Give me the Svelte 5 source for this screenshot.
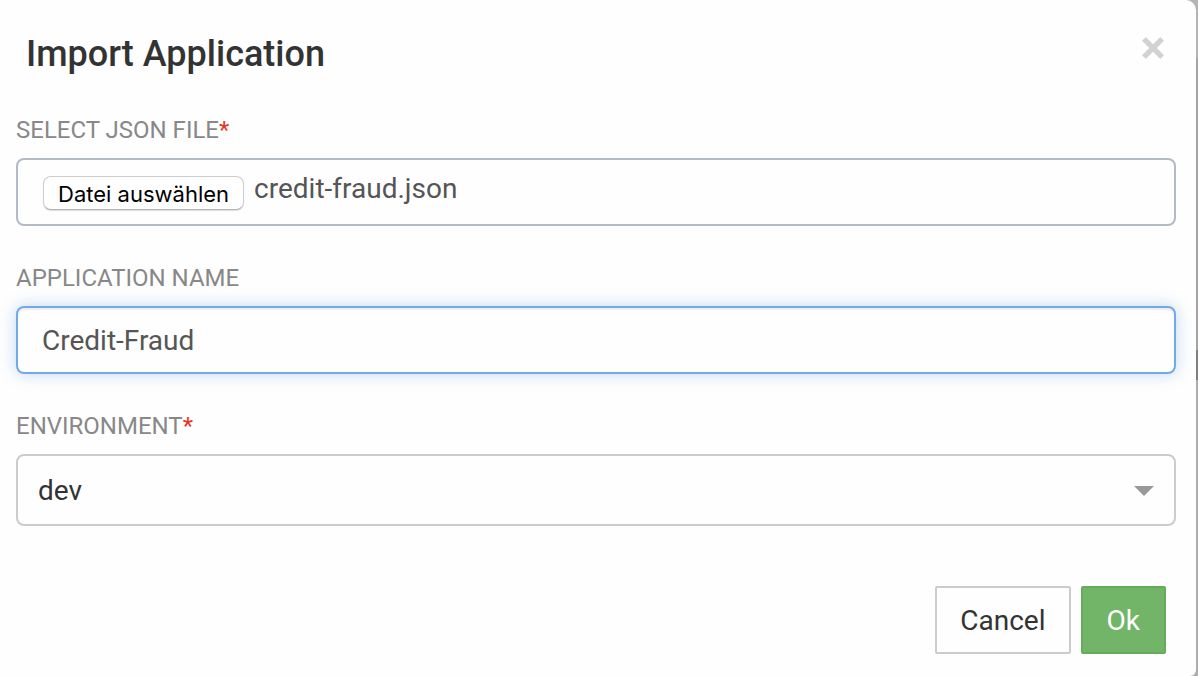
<script>
  let appName = $state('Credit-Fraud');
  let environment = $state('dev');
  let fileName = $state('credit-fraud.json');
  let picker;

  function fileChosen(event) {
    const file = event.currentTarget.files[0];
    if (file) fileName = file.name;
  }
</script>

<div class="backdrop">
  <div class="modal" role="dialog" aria-labelledby="modal-title">
    <header>
      <h1 id="modal-title">Import Application</h1>
      <button class="close" type="button" aria-label="Close">
        <svg viewBox="0 0 22 22" width="22" height="22" aria-hidden="true">
          <path d="M3.8 0 0 3.8 7.2 11 0 18.2 3.8 22 11 14.8 18.2 22 22 18.2 14.8 11 22 3.8 18.2 0 11 7.2Z" fill="#d1d3d2" />
        </svg>
      </button>
    </header>

    <form onsubmit={(e) => e.preventDefault()}>
      <div class="field">
        <label for="file">SELECT JSON FILE<span class="required">*</span></label>
        <div class="control file">
          <input id="file" class="hidden-input" type="file" accept=".json" tabindex="-1" bind:this={picker} onchange={fileChosen} />
          <button class="choose" type="button" onclick={() => picker.click()}>Datei auswählen</button>
          <span class="file-name">{fileName}</span>
        </div>
      </div>

      <div class="field">
        <label for="name">APPLICATION NAME</label>
        <input id="name" class="control active" type="text" bind:value={appName} />
      </div>

      <div class="field">
        <label for="environment">ENVIRONMENT<span class="required">*</span></label>
        <div class="select-wrap">
          <select id="environment" class="control" bind:value={environment}>
            <option value="dev">dev</option>
          </select>
          <svg class="arrow" viewBox="0 0 20 10" width="20" height="10" aria-hidden="true">
            <path d="M0 0H20L10 10Z" fill="#999" />
          </svg>
        </div>
      </div>

      <footer>
        <button class="action cancel" type="button">Cancel</button>
        <button class="action ok" type="submit">Ok</button>
      </footer>
    </form>
  </div>
</div>

<style>
  :global(body) {
    background: #adadad;
  }

  .backdrop,
  .backdrop * {
    box-sizing: border-box;
  }

  .backdrop {
    min-height: 100vh;
    padding-right: 2px;
    display: flex;
    font-family: Roboto, sans-serif;
    background: linear-gradient(#b4b4b4 0 58px, #a4a4a4 58px 350px, #808080 350px 380px, #adadad 380px);
  }

  .modal {
    flex: 1;
    min-width: 0;
    background: #fefefe;
    border-radius: 0 10px 6px 0;
  }

  header {
    display: flex;
    align-items: flex-start;
    justify-content: space-between;
    padding: 32px 32px 0 26px;
  }

  h1 {
    margin: 0;
    font-size: 36px;
    line-height: 44px;
    font-weight: 500;
    color: #333;
  }

  .close {
    display: flex;
    margin-top: 5px;
    padding: 0;
    border: 0;
    background: none;
  }

  form {
    padding: 36px 20px 22px 16px;
  }

  .field {
    margin-bottom: 34px;
  }

  label {
    display: block;
    margin-bottom: 10px;
    font-size: 24px;
    line-height: 36px;
    color: #888;
  }

  .required {
    color: #f03020;
  }

  .control {
    display: block;
    width: 100%;
    height: 68px;
    padding: 0 24px;
    border: 2px solid #b3b9c6;
    border-radius: 8px;
    background: #fefefe;
    font-family: inherit;
    font-size: 28px;
    line-height: 40px;
    color: #555;
    outline: none;
  }

  .file {
    position: relative;
    display: flex;
    align-items: flex-start;
    gap: 10px;
    padding: 9px 25px;
  }

  .hidden-input {
    position: absolute;
    width: 1px;
    height: 1px;
    opacity: 0;
  }

  .choose {
    height: 34px;
    margin-top: 7px;
    padding: 1px 14px 0;
    border: 1px solid #ccc;
    border-bottom-color: #b4b4b4;
    border-radius: 8px;
    background: #fff;
    box-shadow: 0 1px 1px #ddd;
    font-family: Inter, sans-serif;
    font-size: 22px;
    line-height: 32px;
    white-space: nowrap;
    color: #000;
  }

  .active {
    border-color: #73aae5;
    box-shadow: inset 0 2px 2px rgba(0, 0, 0, 0.07), 0 0 16px rgba(115, 170, 229, 0.45);
  }

  .select-wrap {
    position: relative;
  }

  select.control {
    height: 72px;
    padding: 2px 60px 0 20px;
    border-color: #ccc;
    color: #333;
    appearance: none;
  }

  .arrow {
    position: absolute;
    right: 22px;
    top: 32px;
    pointer-events: none;
  }

  footer {
    display: flex;
    justify-content: flex-end;
    gap: 10px;
    padding: 26px 10px 0 0;
  }

  .action {
    height: 68px;
    padding: 2px 23px 0;
    border: 2px solid #ccc;
    border-radius: 2px;
    background: #fefefe;
    font-family: inherit;
    font-size: 28px;
    line-height: 40px;
    color: #333;
  }

  .ok {
    padding: 2px 24px 0;
    border-color: #65ac5a;
    background: #72b568;
    color: #fff;
  }
</style>
